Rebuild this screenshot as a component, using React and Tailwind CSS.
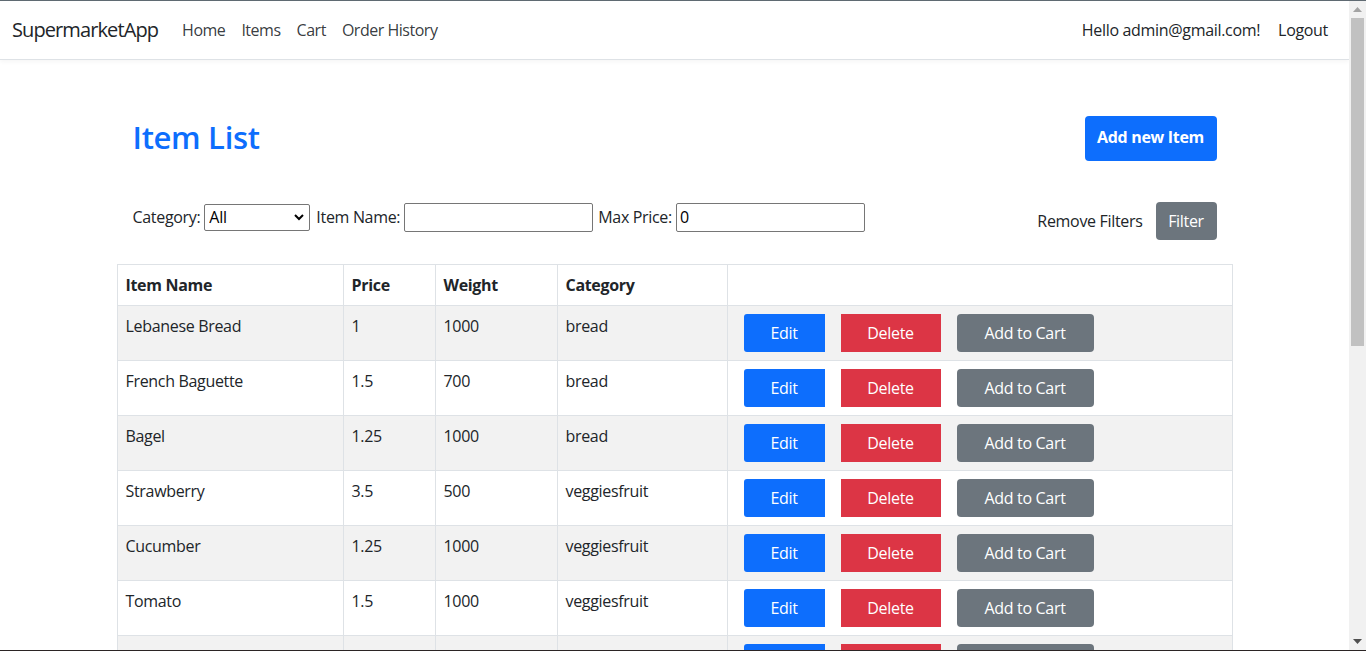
import React from 'react';

const items = [
  { name: 'Lebanese Bread', price: '1', weight: '1000', category: 'bread' },
  { name: 'French Baguette', price: '1.5', weight: '700', category: 'bread' },
  { name: 'Bagel', price: '1.25', weight: '1000', category: 'bread' },
  { name: 'Strawberry', price: '3.5', weight: '500', category: 'veggiesfruit' },
  { name: 'Cucumber', price: '1.25', weight: '1000', category: 'veggiesfruit' },
  { name: 'Tomato', price: '1.5', weight: '1000', category: 'veggiesfruit' },
];

const NavBar = () => (
  <nav className="h-[59px] shrink-0 flex items-center justify-between bg-white border-b border-[#dee2e6] shadow-[0_2px_4px_rgba(0,0,0,0.04)] px-3">
    <div className="flex items-center">
      <span className="text-[20px] leading-[30px] tracking-[-0.045em] text-[#212529] mr-4">SupermarketApp</span>
      <div className="flex items-center">
        {['Home', 'Items', 'Cart', 'Order History'].map(l => (
          <a key={l} className="px-2 text-[16px] leading-6 tracking-[-0.03em] text-[#212529]/90">{l}</a>
        ))}
      </div>
    </div>
    <div className="flex items-center pr-[9px]">
      <span className="text-[16px] leading-6 text-[#212529]">Hello admin@gmail.com!</span>
      <a className="pl-[18px] text-[16px] leading-6 text-[#212529]">Logout</a>
    </div>
  </nav>
);

const Filters = () => (
  <div className="mt-[41px] px-4 flex items-start justify-between text-[16px] text-[#212529]">
    <div className="flex items-center h-[30px]">
      <span>Category:</span>
      <div className="relative ml-1">
        <select className="appearance-none w-[106px] h-[27px] border border-[#767676] rounded-[2px] pl-[4px] text-[16px] text-black bg-white">
          <option>All</option>
        </select>
        <svg className="absolute right-[6px] top-[9px] pointer-events-none" width="10" height="8" viewBox="0 0 10 8">
          <path d="M1 2 L5 6 L9 2" fill="none" stroke="#000" strokeWidth="2" />
        </svg>
      </div>
      <span className="ml-[6px]">Item Name:</span>
      <input className="ml-1 w-[189px] h-[29px] border border-[#767676] rounded-[2px] px-[3px] text-black" />
      <span className="ml-[5px]">Max Price:</span>
      <input defaultValue="0" className="ml-1 w-[189px] h-[29px] border border-[#767676] rounded-[2px] px-[3px] text-black" />
    </div>
    <div className="flex items-center h-[38px]">
      <span className="text-[#212529]">Remove Filters</span>
      <button className="ml-[13px] h-[38px] w-[61px] rounded-[4px] bg-[#6c757d] text-white">Filter</button>
    </div>
  </div>
);

const cell = 'border border-[#dee2e6] p-2 align-top';

const ItemTable = () => (
  <table className="mt-6 w-full border-collapse text-[16px] leading-6 text-[#212529]">
    <thead>
      <tr className="bg-white">
        <th className="w-[226px] border border-[#dee2e6] p-2 text-left font-bold">Item Name</th>
        <th className="w-[92px] border border-[#dee2e6] p-2 text-left font-bold">Price</th>
        <th className="w-[122px] border border-[#dee2e6] p-2 text-left font-bold">Weight</th>
        <th className="w-[170px] border border-[#dee2e6] p-2 text-left font-bold">Category</th>
        <th className="border border-[#dee2e6] p-2"></th>
      </tr>
    </thead>
    <tbody>
      {items.map((it, i) => (
        <tr key={it.name} className={i % 2 === 0 ? 'bg-[#f2f2f2]' : 'bg-white'}>
          <td className={cell}>{it.name}</td>
          <td className={cell}>{it.price}</td>
          <td className={cell}>{it.weight}</td>
          <td className={cell}>{it.category}</td>
          <td className={cell}>
            <div className="flex items-center gap-4 ml-2">
              <button className="w-[81px] h-[38px] rounded-l-[3px] bg-[#0d6efd] text-white">Edit</button>
              <button className="w-[100px] h-[38px] bg-[#dc3545] text-white">Delete</button>
              <button className="w-[137px] h-[38px] rounded-[4px] bg-[#6c757d] text-white">Add to Cart</button>
            </div>
          </td>
        </tr>
      ))}
      {/* next row, only its top shows above the fold */}
      <tr className="bg-[#f2f2f2]">
        <td className={cell}><div className="h-6" /></td>
        <td className={cell}></td>
        <td className={cell}></td>
        <td className={cell}></td>
        <td className={cell}>
          <div className="flex items-center gap-4 ml-2">
            <div className="w-[81px] h-[38px] rounded-l-[3px] bg-[#0d6efd]" />
            <div className="w-[100px] h-[38px] bg-[#dc3545]" />
            <div className="w-[137px] h-[38px] rounded-[4px] bg-[#6c757d]" />
          </div>
        </td>
      </tr>
    </tbody>
  </table>
);

const ScrollBar = () => (
  <div className="w-[17px] shrink-0 bg-[#f1f1f1] flex flex-col items-center">
    <div className="h-[17px] w-full flex items-center justify-center">
      <svg width="9" height="5" viewBox="0 0 9 5"><path d="M0 5 L4.5 0 L9 5 Z" fill="#a3a3a3" /></svg>
    </div>
    <div className="w-[13px] h-[328px] bg-[#c1c1c1]" />
    <div className="flex-1" />
    <div className="h-[17px] w-full flex items-center justify-center">
      <svg width="9" height="5" viewBox="0 0 9 5"><path d="M0 0 L9 0 L4.5 5 Z" fill="#505050" /></svg>
    </div>
  </div>
);

export default function App() {
  return (
    <div className="h-[651px] w-full overflow-hidden flex flex-col border-t border-t-[#5f6a72] border-b border-b-[#2b2424] bg-white tracking-[-0.02em] font-['Segoe_UI','Open_Sans',sans-serif]">
      <div className="flex flex-1 min-h-0">
        <div className="flex-1 min-w-0 flex flex-col overflow-hidden">
          <NavBar />
          <main className="w-[1140px] mx-auto px-3">
            <div className="mt-[56px] px-4 flex items-center justify-between">
              <h2 className="pb-[4px] text-[31px] leading-[38px] font-semibold text-[#0d6efd]">Item List</h2>
              <button className="w-[132px] h-[45px] pb-[4px] rounded-[4px] bg-[#0d6efd] text-white font-bold text-[16px]">Add new Item</button>
            </div>
            <Filters />
            <ItemTable />
          </main>
        </div>
        <ScrollBar />
      </div>
    </div>
  );
}
